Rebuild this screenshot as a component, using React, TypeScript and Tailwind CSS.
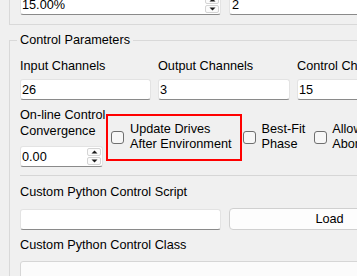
import React from 'react';

const Field = ({ value = '', className = '' }: { value?: string; className?: string }) => (
  <div
    className={`h-[21px] bg-white border border-[#e3e3e3] border-b-[#8a8a8a] rounded-[3px] pl-[1px] flex items-center ${className}`}
  >
    {value}
  </div>
);

const Arrow = ({ up }: { up?: boolean }) => (
  <div className="w-[14px] h-[8px] border border-[#d4d4d4] rounded-[2px] bg-[#fbfbfb] flex items-center justify-center">
    <svg width="7" height="4" viewBox="0 0 7 4">
      <path d={up ? 'M0.5 3.5 L3.5 0.5 L6.5 3.5 Z' : 'M0.5 0.5 L3.5 3.5 L6.5 0.5 Z'} fill="#1a1a1a" />
    </svg>
  </div>
);

const SpinBox = ({ value, className = '' }: { value: string; className?: string }) => (
  <div
    className={`h-[21px] bg-white border border-[#e3e3e3] border-b-[#8a8a8a] rounded-[3px] pl-[1px] flex items-center ${className}`}
  >
    <span className="flex-1">{value}</span>
    <div className="flex flex-col gap-[1px] mr-[1px]">
      <Arrow up />
      <Arrow />
    </div>
  </div>
);

const Check = () => (
  <div className="w-[13px] h-[13px] shrink-0 rounded-[3px] border border-[#6f6f6f] bg-[#f7f7f7]" />
);

export default function App() {
  return (
    <div className="w-[357px] h-[276px] overflow-hidden bg-[#f0f0f0] text-black font-['Liberation_Sans',Arial,sans-serif] text-[12.7px] leading-[16px]">
      <div className="w-[440px]">
        {/* previous group, mostly scrolled away */}
        <div className="ml-[9px] -mt-[12px] border border-[#d9d9d9] pt-[5px] pb-[9px] pl-[10px] flex gap-[8px]">
          <SpinBox value="15.00%" className="w-[201px]" />
          <Field value="2" className="flex-1 pl-[2px]" />
        </div>

        <fieldset className="ml-[9px] mt-[7px] border border-[#d9d9d9] pl-[10px] pt-[10px] min-w-0">
          <legend className="-ml-[3px] px-[3px]">Control Parameters</legend>

          <div className="grid grid-cols-[131px_132px_132px] gap-x-[7px]">
            <div>Input Channels</div>
            <div>Output Channels</div>
            <div>Control Channels</div>
            <Field value="26" className="mt-[5px]" />
            <Field value="3" className="mt-[5px]" />
            <Field value="15" className="mt-[5px]" />
          </div>

          <div className="flex items-center mt-[7px]">
            <div className="w-[86px] shrink-0">
              <div className="whitespace-nowrap">
                On-line Control
                <br />
                Convergence
              </div>
              <SpinBox value="0.00" className="w-[83px] mt-[7px]" />
            </div>
            <div className="flex items-center border-2 border-[#ff0000] h-[47px] pl-[3px] pr-[8px] gap-[6px]">
              <Check />
              <div className="leading-[15px] whitespace-nowrap">
                Update Drives
                <br />
                After Environment
              </div>
            </div>
            <div className="flex items-center ml-[1px] gap-[6px]">
              <Check />
              <div className="leading-[15px] whitespace-nowrap">
                Best-Fit
                <br />
                Phase
              </div>
            </div>
            <div className="flex items-center ml-[9px] gap-[5px]">
              <Check />
              <div className="leading-[15px] whitespace-nowrap">
                Allow
                <br />
                Abort
              </div>
            </div>
          </div>

          <div className="border-t border-[#d6d6d6] mt-[8px] pt-[8px]">
            <div>Custom Python Control Script</div>
            <div className="flex gap-[8px] mt-[9px]">
              <Field className="w-[201px]" />
              <button className="w-[201px] h-[22px] rounded-[4px] border border-[#d0d0d0] bg-[#fdfdfd] -mt-[1px]">
                Load
              </button>
            </div>
            <div className="mt-[7px]">Custom Python Control Class</div>
            <div className="mt-[8px] h-[60px] border border-[#d6d6d6] rounded-[3px] bg-[#fbfbfb]" />
          </div>
        </fieldset>
      </div>
    </div>
  );
}
